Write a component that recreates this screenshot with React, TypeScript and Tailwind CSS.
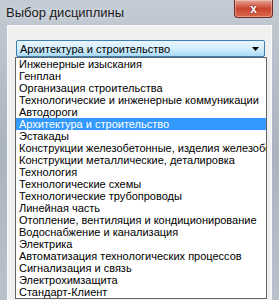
const items = [
  "Инженерные изыскания",
  "Генплан",
  "Организация строительства",
  "Технологические и инженерные коммуникации",
  "Автодороги",
  "Архитектура и строительство",
  "Эстакады",
  "Конструкции железобетонные, изделия железобетонные",
  "Конструкции металлические, деталировка",
  "Технология",
  "Технологические схемы",
  "Технологические трубопроводы",
  "Линейная часть",
  "Отопление, вентиляция и кондиционирование",
  "Водоснабжение и канализация",
  "Электрика",
  "Автоматизация технологических процессов",
  "Сигнализация и связь",
  "Электрохимзащита",
  "Стандарт-Клиент",
];

const selected = "Архитектура и строительство";

export default function App() {
  return (
    <div className="flex h-[300px] w-[279px] flex-col overflow-hidden bg-gradient-to-b from-[#c3cbd4] via-[#aab4bf] to-[#b9c2cc] font-['Liberation_Sans',sans-serif]">
      <div className="flex h-[25px] shrink-0 items-start justify-between">
        <div className="pl-[6px] pt-[5px] text-[13px] leading-[16px] text-[#1b1b1b] [text-shadow:0_0_6px_#e8ecf0]">
          Выбор дисциплины
        </div>
        <div className="mr-[6px] flex h-[18px] w-[39px] items-center justify-center rounded-b-[4px] border border-t-0 border-[#6e2a20] bg-gradient-to-b from-[#e6a294] via-[#c9452f] to-[#d9684d] shadow-[inset_0_0_0_1px_rgba(255,255,255,0.35)]">
          <span className="text-[12px] font-bold leading-none text-white [text-shadow:0_0_2px_#4a1008]">x</span>
        </div>
      </div>
      <div className="mx-[7px] flex flex-1 flex-col border border-b-0 border-[#f8f9fa] bg-[#f0f0f0] pl-[8px] pr-[5px] pt-[14px]">
        <div className="mr-[1px] flex h-[17px] items-center justify-between rounded-[2px] border border-[#3c7fb1] bg-gradient-to-b from-[#eaf6fd] via-[#d4eefc] to-[#a9dbf6] pl-[3px] pr-[5px]">
          <span className="text-[11px] leading-[12px] text-black">{selected}</span>
          <svg width="7" height="4" viewBox="0 0 7 4">
            <path d="M0 0h7L3.5 4z" fill="#000" />
          </svg>
        </div>
        <div className="-ml-px flex w-[252px] flex-col border border-[#646464] bg-white">
          {items.map((item) => (
            <div
              key={item}
              className={
                item === selected
                  ? "h-[12px] overflow-hidden whitespace-nowrap bg-[#3399ff] pl-[3px] text-[11px] leading-[12px] text-white"
                  : "h-[12px] overflow-hidden whitespace-nowrap pl-[3px] text-[11px] leading-[12px] text-black"
              }
            >
              {item}
            </div>
          ))}
        </div>
      </div>
    </div>
  );
}
